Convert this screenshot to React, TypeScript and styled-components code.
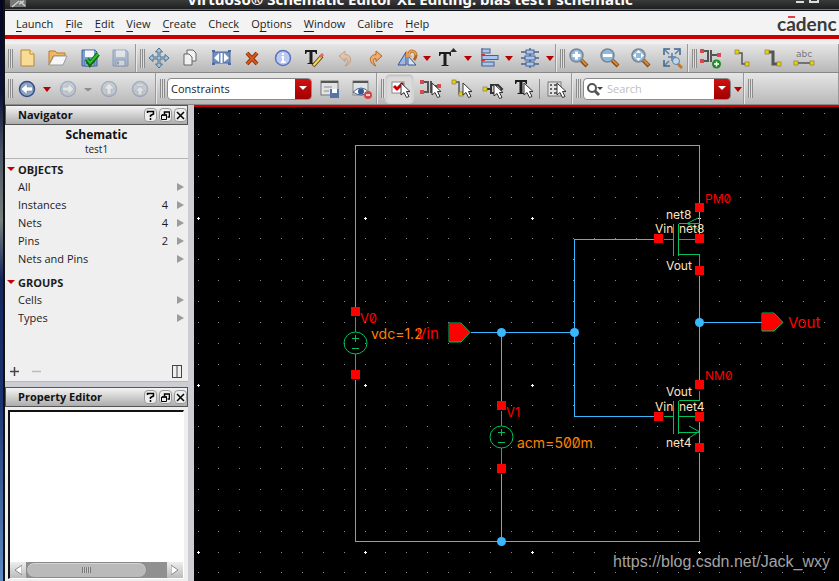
import React from "react";
import styled, { createGlobalStyle } from "styled-components";

const GlobalStyle = createGlobalStyle`
  * { box-sizing: border-box; }
  body { margin: 0; background: #000; overflow: hidden; }
  button, input, select { font: inherit; color: inherit; }
`;

const RED = "#cc0000";

const Desktop = styled.div`
  display: flex;
  min-height: 100vh;
  padding-left: 3px;
  background: linear-gradient(#04061f 0%, #0a1238 16%, #4a5566 26%, #74807c 38%, #16265c 48%, #1c3474 70%, #5a8cc4 100%);
  font-family: "Open Sans", "Noto Sans", sans-serif;
  font-size: 11px;
  line-height: 16px;
  color: #1c1c1c;
`;

const Window = styled.div`
  display: flex;
  flex-direction: column;
  flex: 1;
  min-width: 0;
  height: 100vh;
  border-left: 2px solid #111;
  background: #efefef;
`;

const TitleBar = styled.header`
  display: flex;
  align-items: flex-end;
  height: 11px;
  padding: 0 13px 0 5px;
  overflow: hidden;
  background: linear-gradient(#3a3a3a, #1c1c1c);
  border-bottom: 1px solid #0a0e18;
  box-shadow: inset 0 -1px #66788f;
`;

const TitleText = styled.h1`
  flex: 1;
  margin: 0;
  font: bold 15px/22px "Noto Sans", sans-serif;
  text-align: center;
  color: #fff;
  white-space: nowrap;
`;

const MenuBar = styled.nav`
  display: flex;
  align-items: center;
  height: 28px;
  padding: 2px 0 0 11px;
  gap: 12px;
  background: #f3f3f3;
  border-bottom: 4px solid ${RED};
`;

const MenuItem = styled.button`
  padding: 0;
  border: 0;
  background: none;
  font-size: 11px;
  line-height: 16px;
  u { text-underline-offset: 3px; }
`;

const Logo = styled.div`
  display: flex;
  width: 62px;
  margin-left: auto;
  overflow: hidden;
  font: bold 19px/22px Lato, sans-serif;
  color: #3a3a3a;
`;

const Barred = styled.span`
  position: relative;
  &::before {
    content: "";
    position: absolute;
    top: 3px;
    left: 2px;
    right: 1px;
    height: 2px;
    background: #e04048;
  }
`;

const Toolbars = styled.div`
  padding-top: 5px;
`;

const ToolRow = styled.div<{ $h: number }>`
  display: flex;
  height: ${(p) => p.$h}px;
  gap: 1px;
  background: #e8e8e8;
  border-bottom: 1px solid #888;
`;

const ToolGroup = styled.div<{ $fill?: boolean }>`
  display: flex;
  align-items: center;
  flex: ${(p) => (p.$fill ? "1 1 0" : "0 0 auto")};
  min-width: 0;
  padding: 0 2px 0 3px;
  gap: 4px;
  background: linear-gradient(#e6e6e6, #b8b8b8);
  border-right: 1px solid #999;
`;

const Grip = styled.span`
  width: 5px;
  height: 19px;
  margin-right: -4px;
  background: repeating-linear-gradient(90deg, #8c8c8c 0 1px, #dedede 1px 2px);
`;

const ToolButton = styled.button<{ $on?: boolean }>`
  display: grid;
  place-items: center;
  flex: none;
  width: 27px;
  height: 28px;
  padding: 0;
  border: 0;
  border-radius: 4px;
  background: ${(p) => (p.$on ? "#dadada" : "none")};
  box-shadow: ${(p) => (p.$on ? "inset 0 1px 2px #bbb, 0 0 0 1px #d4d4d4" : "none")};
  &:disabled { opacity: 0.45; }
  svg { display: block; overflow: visible; }
`;

const DropButton = styled.button`
  width: 8px;
  height: 20px;
  margin: 0 -1px;
  padding: 0;
  border: 0;
  background: none;
  flex: none;
  svg { display: block; }
`;

const Divider = styled.span`
  width: 1px;
  height: 20px;
  margin: 0 -2px;
  background: #888;
`;

const Field = styled.div<{ $w: number }>`
  display: flex;
  align-items: center;
  width: ${(p) => p.$w}px;
  height: 22px;
  margin-left: 2px;
  border: 1px solid #8a8a8a;
  border-radius: 4px;
  background: #fff;
  overflow: hidden;
`;

const FieldSelect = styled.select`
  appearance: none;
  width: 100%;
  height: 20px;
  padding: 0 18px 0 3px;
  border: 0;
  background: transparent;
  outline: none;
`;

const FieldInput = styled.input`
  flex: 1;
  min-width: 0;
  height: 20px;
  padding: 0 4px;
  border: 0;
  outline: none;
  font-size: 11px;
  &::placeholder { color: #c0c0c0; opacity: 1; }
`;

const RedCap = styled.span`
  display: grid;
  place-items: center;
  flex: none;
  width: 16px;
  height: 20px;
  margin-left: -16px;
  background: linear-gradient(#d01010, #a00000);
  pointer-events: none;
`;

const SearchCap = styled(RedCap)`
  margin-left: 0;
`;

const Main = styled.main`
  display: flex;
  flex: 1;
  min-height: 0;
`;

const Side = styled.aside`
  display: flex;
  flex-direction: column;
  flex: none;
  width: 189px;
  border-right: 6px solid #cdced4;
`;

const PanelTitle = styled.div`
  display: flex;
  align-items: center;
  height: 20px;
  padding-left: 12px;
  gap: 2px;
  flex: none;
  border: 1px solid #555;
  background: linear-gradient(#f4f4f4, #acacac);
  h2 {
    flex: 1;
    margin: 0;
    font-size: 11px;
    line-height: 16px;
    color: #111;
  }
`;

const PanelButton = styled.button`
  display: grid;
  place-items: center;
  width: 13px;
  height: 14px;
  padding: 0;
  border: 1px solid #999;
  border-radius: 4px;
  background: #eee;
`;

const Heading = styled.div`
  padding: 2px 0 3px;
  text-align: center;
  color: #222;
  border-bottom: 1px solid #b4b4b4;
  strong {
    display: block;
    font-size: 12px;
    color: #111;
  }
  span {
    display: block;
    font-size: 10px;
    line-height: 12px;
  }
`;

const NavBody = styled.div`
  flex: none;
  padding-top: 2px;
`;

const Section = styled.h3`
  display: flex;
  align-items: center;
  gap: 3px;
  height: 17px;
  margin: 0;
  padding-left: 2px;
  font-size: 11px;
`;

const List = styled.ul`
  margin: 0 0 6px;
  padding: 0;
  list-style: none;
`;

const NavRow = styled.button`
  display: flex;
  align-items: center;
  width: 100%;
  height: 18px;
  padding: 0 4px 0 13px;
  border: 0;
  background: none;
  text-align: left;
  span { flex: 1; }
  svg { margin-left: 9px; }
`;

const NavFoot = styled.div`
  display: flex;
  align-items: center;
  gap: 13px;
  height: 20px;
  margin-top: 28px;
  padding: 0 6px 0 5px;
`;

const FootButton = styled.button<{ $end?: boolean }>`
  display: grid;
  padding: 0;
  border: 0;
  background: none;
  margin-left: ${(p) => (p.$end ? "auto" : "0")};
`;

const Splitter = styled.div`
  height: 6px;
  flex: none;
  background: #cdced4;
  border-top: 1px solid #b8b8bc;
`;

const Editor = styled.div`
  display: flex;
  flex-direction: column;
  justify-content: flex-end;
  flex: 1;
  min-height: 0;
  margin: 3px 4px 2px 3px;
  border: 1px solid #fff;
  border-top: 2px solid #111;
  border-left: 2px solid #111;
  background: #fff;
`;

const Scroll = styled.div`
  display: flex;
  height: 16px;
  background: #909090;
`;

const ScrollButton = styled.button`
  display: grid;
  place-items: center;
  width: 16px;
  padding: 0;
  border: 0;
  background: linear-gradient(#eee, #bbb);
`;

const Track = styled.div`
  flex: 1;
  display: flex;
`;

const Thumb = styled.div`
  display: grid;
  place-items: center;
  width: 86%;
  border: 1px solid #8a8a8a;
  border-radius: 8px;
  background: #bababa;
  box-shadow: inset 0 1px #d4d4d4;
`;

const ThumbGrip = styled.span`
  width: 9px;
  height: 6px;
  background: repeating-linear-gradient(90deg, #777 0 1px, #ccc 1px 2px);
`;

const Canvas = styled.section`
  position: relative;
  flex: 1;
  min-width: 0;
  border-top: 2px solid ${RED};
  background: #000;
  overflow: hidden;
  > svg { display: block; width: 100%; height: 100%; }
`;

const Watermark = styled.span`
  position: absolute;
  right: 9px;
  bottom: 8px;
  font: 16px/22px "Liberation Sans", Arial, sans-serif;
  color: #a4a4a4;
`;

const Label = styled.text<{ $c: string; $s: number }>`
  font-family: Inter, sans-serif;
  font-size: ${(p) => p.$s}px;
  font-weight: 400;
  font-feature-settings: "zero" 1;
  fill: ${(p) => p.$c};
`;

/* ---------- icons ---------- */

const Icon = ({ children }: { children: React.ReactNode }) => (
  <svg width="24" height="24" viewBox="0 0 24 24" fill="none" aria-hidden="true">{children}</svg>
);

const Cursor = ({ x = 12, y = 6 }: { x?: number; y?: number }) => (
  <path d="M0 0V12L3 9.500L5.500 14.500L8 13.500L5.500 8.500H9Z" transform={`translate(${x} ${y})`} fill="#fff" stroke="#333" />
);

const Floppy = () => (
  <>
    <path d="M5 4H18L20 6V20H5Z" fill="#7d9fd2" stroke="#42639c" />
    <path d="M8 4.500H17V11H8Z" fill="#f3f6fb" />
    <path d="M8 14H17V20H8Z" fill="#dde4f0" stroke="#42639c" />
    <path d="M10 15.500V18.500" stroke="#42639c" strokeWidth="2" />
  </>
);

const Ball = ({ dir }: { dir: "left" | "right" | "up" | "top" }) => (
  <>
    <circle cx="12" cy="12" r="7.500" fill={dir === "left" ? "#8ea6c4" : "#b8c6d8"} stroke={dir === "left" ? "#304f88" : "#6b83a8"} strokeWidth="1.500" />
    <path
      d={dir === "top" ? "M8 7H16V9H8ZM12 9.500L17 14H14V18H10V14H7Z" : "M6 12L12 6.500V10H17.500V14H12V17.500Z"}
      transform={dir === "right" ? "rotate(180 12 12)" : dir === "up" ? "rotate(90 12 12)" : undefined}
      fill="#fff"
      stroke="#71839c"
      strokeWidth=".6"
    />
  </>
);

const Lens = ({ children }: { children: React.ReactNode }) => (
  <>
    <path d="M14 14L20 20" stroke="#8a4a12" strokeWidth="4" />
    <path d="M14.500 14L19.500 19" stroke="#d88a3c" strokeWidth="2" />
    <circle cx="9.500" cy="9.500" r="6.500" fill="#93b9da" stroke="#7a8794" strokeWidth="1.500" />
    {children}
  </>
);

const Pad = ({ x, y, c = "#e8d400" }: { x: number; y: number; c?: string }) => (
  <rect x={x} y={y} width="4" height="4" fill={c} stroke="#8b7d40" strokeWidth=".7" />
);

const Gate = () => (
  <>
    <path d="M3 5H9V15H3M12 4V16M12 9H20" stroke="#555" strokeWidth="2" />
    <rect x="1" y="3" width="4" height="4" fill="#d8474b" />
    <rect x="1" y="13" width="4" height="4" fill="#d8474b" />
    <rect x="18" y="7" width="4" height="4" fill="#d8474b" />
  </>
);

const LetterT = () => <path d="M3 4H15V8H14L13 6H10.500V17H12.500V18H5.500V17H7.500V6H5L4 8H3Z" fill="#1c1c1c" />;

const Hook = ({ flip }: { flip?: boolean }) => (
  <g transform={flip ? "translate(24 0) scale(-1 1)" : undefined}>
    <path d="M6 10L12 5V8.500C20 9 19 18 12 20C16 15.500 15 12.500 12 12.500V15.500Z" fill={flip ? "#f0ac6c" : "#f2b384"} stroke="#b8651c" strokeLinejoin="round" />
  </g>
);

const icons = {
  create: <><path d="M6 4H15L19 8V20H6Z" fill="#f8dc94" stroke="#b88432" /><path d="M15 4V8H19" fill="#fff0c4" stroke="#b88432" /></>,
  open: <><path d="M3 19V5H9L11 7H19V10H7Z" fill="#f0b860" stroke="#b87a30" /><path d="M3 19L8 10H21L17 19Z" fill="#f7f7f7" stroke="#999" /></>,
  check: <><Floppy /><path d="M10 13L13 18L21 8" stroke="#0b6d0b" strokeWidth="4.500" /><path d="M10 13L13 17L21 8" stroke="#30c030" strokeWidth="2" /></>,
  save: <Floppy />,
  move: <path d="M12 2L15.500 6H13V11H18V8.500L22 12L18 15.500V13H13V18H15.500L12 22L8.500 18H11V13H6V15.500L2 12L6 8.500V11H11V6H8.500Z" fill="#a8c4d8" stroke="#48708e" />,
  copy: <><path d="M9 4H15L18 7V15H9Z" fill="#f1f1f1" stroke="#666" /><path d="M6 8H11L14 11V19H6Z" fill="#f1f1f1" stroke="#666" /></>,
  stretch: <><rect x="4" y="6" width="17" height="11" fill="#6c8fc6" stroke="#4c6a9e" /><path d="M5 12L10 7V16ZM20 12L15 7V16Z" fill="#fff" /><path d="M12.500 7V17" stroke="#fff" strokeWidth="2" /><path d="M3 5H6M3 18H6M19 5H22M19 18H22" stroke="#4c6a9e" strokeWidth="2" /></>,
  del: <><path d="M7 7L17 18M17 7L7 18" stroke="#8c2c04" strokeWidth="4" /><path d="M7 7L17 18M17 7L7 18" stroke="#d85a1c" strokeWidth="2" /></>,
  info: <><circle cx="12" cy="12" r="7.500" fill="#bcc9f0" stroke="#5b73bd" strokeWidth="1.500" /><path d="M12 7V9M10.500 11H12V16M10 16H14.500" stroke="#fff" strokeWidth="2" /></>,
  textEdit: <><LetterT /><path d="M11 20L20 10" stroke="#62441c" strokeWidth="4" /><path d="M11.500 19.500L19.500 10.500" stroke="#f2dc50" strokeWidth="2" /><path d="M18 11L21 8" stroke="#e06a60" strokeWidth="3" /></>,
  undo: <Hook />,
  redo: <Hook flip />,
  rotate: <><path d="M3 19L11 6V19Z" fill="#9db8e8" stroke="#35558e" /><path d="M13 19V10L21 19Z" fill="#dde6f6" stroke="#35558e" /><path d="M14 8C15 4 20 4 21 9C21 12 20 13 19 14" stroke="#b4651c" strokeWidth="3" /><path d="M14 8C15 4 20 4 21 9" stroke="#f0a860" strokeWidth="1.500" /><path d="M11 4V11H17Z" fill="#e49a54" /></>,
  textUp: <><g transform="translate(0 2)"><LetterT /></g><path d="M14 6L17.500 2L21 6Z" fill="#2a2a2a" /></>,
  align: <><path d="M5 2V20" stroke="#456292" /><path d="M4 8.500H8M4 14.500H8" stroke="#d33" /><rect x="5" y="3" width="8" height="4" fill="#a9c4ee" stroke="#456292" /><rect x="5" y="9.500" width="16" height="4" fill="#a9c4ee" stroke="#456292" /><rect x="5" y="16" width="12" height="4" fill="#a9c4ee" stroke="#456292" /></>,
  spread: <><path d="M3 6H21M3 12H21M3 18H21M12 2V22" stroke="#456292" strokeWidth="1.500" /><rect x="8" y="4" width="8" height="4" fill="#a9c4ee" stroke="#456292" /><rect x="7" y="10" width="10" height="4" fill="#a9c4ee" stroke="#456292" /><rect x="8" y="16" width="8" height="4" fill="#a9c4ee" stroke="#456292" /></>,
  zoomIn: <Lens><path d="M9.500 5.500V13.500M5.500 9.500H13.500" stroke="#fff" strokeWidth="3" /></Lens>,
  zoomOut: <Lens><path d="M5 9.500H14" stroke="#fff" strokeWidth="3" /></Lens>,
  zoomFit: <Lens><path d="M9.500 4L12 7H7ZM9.500 15L12 12H7ZM4 9.500L7 7V12ZM15 9.500L12 7V12Z" fill="#fff" /></Lens>,
  zoomBox: <><path d="M4 9V3H10M14 3H20V9M4 14V20H10" stroke="#39648c" strokeWidth="1.500" /><path d="M5 4L9 8M19 4L15 8M5 19L9 15M12 7V15M8 11H16" stroke="#5580a8" strokeWidth="1.500" /><path d="M17 17L22 22" stroke="#c57830" strokeWidth="3" /><circle cx="16" cy="15" r="3.500" fill="#bcd8ec" stroke="#6282a0" /></>,
  instance: <><Gate /><circle cx="17.500" cy="18" r="4.500" fill="#1c8c24" /><path d="M17.500 15.500V20.500M15 18H20" stroke="#fff" strokeWidth="1.500" /></>,
  wire: <><path d="M7 7H12V18H18" stroke="#555" strokeWidth="1.500" /><Pad x={5} y={4} /><Pad x={15} y={16} /></>,
  wideWire: <><path d="M7 6H12V18H18" stroke="#555" strokeWidth="3" /><Pad x={4} y={4} /><Pad x={16} y={16} /></>,
  back: <Ball dir="left" />,
  forward: <Ball dir="right" />,
  up: <Ball dir="up" />,
  top: <Ball dir="top" />,
  form: <><rect x="3" y="4" width="17" height="14" fill="#dfe3e6" stroke="#777" /><path d="M3 5H20" stroke="#555" strokeWidth="2" /><path d="M6 10H14M6 14H11" stroke="#888" /><rect x="12" y="12" width="9" height="9" fill="#5474aa" /><rect x="14" y="12" width="5" height="4" fill="#fff" /></>,
  eye: <><rect x="4" y="4" width="15" height="14" fill="#dfe3e6" stroke="#888" /><path d="M4 5H19" stroke="#555" strokeWidth="2" /><path d="M4 15Q12 7 20 15Q12 21 4 15Z" fill="#fff" stroke="#4a5f80" /><circle cx="12" cy="14.500" r="3" fill="#2c5c9c" /><circle cx="19" cy="18" r="4" fill="#d64444" /><path d="M17 18H21" stroke="#fff" strokeWidth="1.500" /></>,
  selAll: <><rect x="4" y="5" width="12" height="11" fill="#fff" stroke="#888" /><path d="M6 9L9 12L15 6" stroke="#d00000" strokeWidth="3" /><Cursor x={13} /></>,
  selInst: <><Gate /><Cursor x={13} /></>,
  selWire: <><path d="M4 5H9V17H13" stroke="#555" strokeWidth="1.500" /><Pad x={2} y={3} /><Pad x={9} y={15} /><Cursor x={13} /></>,
  selPin: <><path d="M3 12H10M10 8H17L21 12L17 16H10Z" stroke="#333" strokeWidth="2" /><Pad x={2} y={10} /><Cursor x={13} y={7} /></>,
  selText: <><g transform="translate(0 -1)"><LetterT /></g><Cursor x={12} /></>,
  selList: <><rect x="4" y="5" width="13" height="14" fill="#e4e4e4" stroke="#777" /><path d="M6 8H8M10 8H15M6 12H8M10 12H15M6 16H8M10 16H13" stroke="#666" strokeWidth="2" /><Cursor x={13} /></>,
};

type IconName = keyof typeof icons;

const Tool = ({ name, label, off, on }: { name: IconName; label: string; off?: boolean; on?: boolean }) => (
  <ToolButton type="button" aria-label={label} disabled={off} $on={on}>
    <Icon>{icons[name]}</Icon>
  </ToolButton>
);

const Drop = ({ label, off }: { label: string; off?: boolean }) => (
  <DropButton type="button" aria-label={label} disabled={off}>
    <svg width="8" height="20"><path d={off ? "M0 9H8L5 12H3Z" : "M0 8H8L4 13Z"} fill={off ? "#8e8e8e" : "#b80000"} /></svg>
  </DropButton>
);

const WhiteArrow = () => <svg width="8" height="5"><path d="M0 0H8L4 4Z" fill="#fff" /></svg>;

/* ---------- panels ---------- */

const PanelHead = ({ title }: { title: string }) => (
  <PanelTitle>
    <h2>{title}</h2>
    <PanelButton type="button" aria-label="Help">
      <svg width="9" height="10" fill="none" stroke="#000" strokeWidth="1.500"><path d="M1.500 3V1.500H7.500V4L4.500 5.500V7M4.500 8V10" /></svg>
    </PanelButton>
    <PanelButton type="button" aria-label="Float">
      <svg width="9" height="9" fill="none" stroke="#000"><path d="M3.500 3V1H8.500V6H6.500M3 1H9M1 4H6" strokeWidth="1.500" /><path d="M.5 4H5.500V8.500H.5Z" /></svg>
    </PanelButton>
    <PanelButton type="button" aria-label="Close">
      <svg width="9" height="9" stroke="#000" strokeWidth="1.500"><path d="M1 1L8 8M8 1L1 8" /></svg>
    </PanelButton>
  </PanelTitle>
);

const NavSection = ({ title, rows }: { title: string; rows: [string, number?][] }) => (
  <>
    <Section><svg width="8" height="5"><path d="M0 0H8L4 4Z" fill="#c40000" /></svg>{title}</Section>
    <List>
      {rows.map(([name, count]) => (
        <li key={name}>
          <NavRow type="button">
            <span>{name}</span>{count}
            <svg width="7" height="8"><path d="M0 0L7 4L0 8Z" fill="#9c9c9c" /></svg>
          </NavRow>
        </li>
      ))}
    </List>
  </>
);

/* ---------- schematic ---------- */

const PITCH = 167 / 8;
const CYAN = "#38b8ff";
const GREEN = "#00c060";
const CREAM = "#ffe4c0";

const GridDots = () => {
  const minor: string[] = [];
  const major: string[] = [];
  for (let i = 0; i < 96; i++) {
    for (let j = -5; j < 60; j++) {
      const x = Math.floor(4 + i * PITCH);
      const y = Math.floor(111 + j * PITCH);
      if (i % 8 === 0 && j % 8 === 0) major.push(`M${x - 1} ${y}h3v1h-3zM${x} ${y - 1}h1v3h-1z`);
      else minor.push(`M${x} ${y}h1v1h-1z`);
    }
  }
  return (
    <>
      <path d={minor.join("")} fill="#8888a0" />
      <path d={major.join("")} fill="#fff" />
    </>
  );
};

const Source = ({ x, y }: { x: number; y: number }) => (
  <g transform={`translate(${x} ${y})`} stroke={GREEN} fill="none">
    <path d="M.5-26V-11M.5 11V28M-3 -4.500H4M.5 -8V-1M-3 5.500H4" shapeRendering="crispEdges" />
    <ellipse cx=".5" cy="0" rx="11.500" ry="11" />
  </g>
);

const terminals = [
  [161, 205], [161, 268], [307, 299], [307, 362], [505, 101], [505, 132], [505, 164],
  [464, 132], [505, 278], [505, 310], [464, 310], [505, 341],
];
const junctions = [[307, 225], [380, 225], [505, 215], [307, 434]];
const labels: [string, number, number, string, number][] = [
  ["V0", 166, 216, "#f00", 13], ["vdc=1.2", 177, 232, "#ff8000", 14], ["Vin", 222, 232, "#f00", 15],
  ["V1", 312, 310, "#f00", 13], ["acm=500m", 323, 341, "#ff8000", 14],
  ["PM0", 511, 96, "#f00", 12], ["net8", 472, 112, CREAM, 12], ["Vin", 461, 126, CREAM, 12],
  ["net8", 485, 126, CREAM, 12], ["Vout", 472, 163, CREAM, 12], ["Vout", 594, 221, "#f00", 15],
  ["NM0", 511, 273, "#f00", 12], ["Vout", 472, 289, CREAM, 12], ["Vin", 461, 304, CREAM, 12],
  ["net4", 485, 304, CREAM, 12], ["net4", 472, 340, CREAM, 12],
];

const Schematic = () => (
  <svg role="img" aria-label="Schematic test1">
    <g shapeRendering="crispEdges">
      <GridDots />
    </g>
    <g transform="translate(.5 .5)" fill="none" shapeRendering="crispEdges">
      <path
        stroke={CYAN}
        d="M161 200V38H505V127M161 272V434H505V345M505 168V273M505 314V338M276 225H380M307 225V294M307 366V434M459 132H380V309H459M505 215H568"
      />
      <path
        stroke={GREEN}
        d="M469 132H479M479 116V148M484 116V148M484 116H505M484 132H501M484 147H505V160M469 309H479M479 293V326M484 293V326M484 293H505V283M484 309H501M484 325H505"
      />
    </g>
    <path stroke={GREEN} fill="none" d="M504 111L493 116.500L504 122M495 319L505 324.500L495 331" />
    <Source x={161} y={236} />
    <Source x={307} y={330} />
    <path d="M255 216H267L276 225.500L267 235H255ZM568 206H580L589 215.500L580 224H568Z" fill="#f00" stroke={GREEN} />
    <path d="M255 216H267L275 225.500L267 234H255ZM568 206H580L588 215.500L580 223H568Z" fill="#f00" />
    {terminals.map(([x, y]) => <rect key={`${x}-${y}`} x={x - 4} y={y - 5} width="9" height="9" fill="#f00" />)}
    {junctions.map(([x, y]) => <circle key={`${x}-${y}`} cx={x + 0.5} cy={y + 0.5} r="4.500" fill={CYAN} />)}
    {labels.map(([t, x, y, c, s]) => <Label key={`${x}-${y}`} x={x} y={y} $c={c} $s={s}>{t}</Label>)}
  </svg>
);

export default function App() {
  return (
    <>
      <GlobalStyle />
      <Desktop>
        <Window>
          <TitleBar>
            <svg width="16" height="10"><path d="M0 0H16V7H0Z" fill="#777" /><path d="M2 7L9 1M9 4L14 1M10 1L15 6" stroke="#ccc" strokeWidth="1.500" /></svg>
            <TitleText>Virtuoso® Schematic Editor XL Editing: bias test1 schematic</TitleText>
            <svg width="32" height="10" fill="none" stroke="#ddd" strokeWidth="2"><path d="M2 3H10M16 0V3H24V0" transform="translate(0 -1)" /></svg>
          </TitleBar>
          <MenuBar>
            <MenuItem><u>L</u>aunch</MenuItem>
            <MenuItem><u>F</u>ile</MenuItem>
            <MenuItem><u>E</u>dit</MenuItem>
            <MenuItem><u>V</u>iew</MenuItem>
            <MenuItem><u>C</u>reate</MenuItem>
            <MenuItem>Chec<u>k</u></MenuItem>
            <MenuItem>O<u>p</u>tions</MenuItem>
            <MenuItem><u>W</u>indow</MenuItem>
            <MenuItem>Cali<u>b</u>re</MenuItem>
            <MenuItem><u>H</u>elp</MenuItem>
            <Logo>c<Barred>a</Barred>denc</Logo>
          </MenuBar>
          <Toolbars>
            <ToolRow $h={29}>
              <ToolGroup>
                <Grip />
                <Tool name="create" label="New" />
                <Tool name="open" label="Open" />
                <Tool name="check" label="Check and save" />
                <Tool name="save" label="Save" off />
              </ToolGroup>
              <ToolGroup>
                <Grip />
                <Tool name="move" label="Move" />
                <Tool name="copy" label="Copy" />
                <Tool name="stretch" label="Stretch" />
                <Tool name="del" label="Delete" />
                <Tool name="info" label="Properties" />
                <Tool name="textEdit" label="Edit text" />
                <Tool name="undo" label="Undo" off />
                <Tool name="redo" label="Redo" />
                <Tool name="rotate" label="Rotate" />
                <Drop label="Rotate options" />
                <Tool name="textUp" label="Text direction" />
                <Drop label="Text options" />
                <Tool name="align" label="Align" />
                <Drop label="Align options" />
                <Tool name="spread" label="Distribute" />
                <Drop label="Distribute options" />
              </ToolGroup>
              <ToolGroup>
                <Grip />
                <Tool name="zoomIn" label="Zoom in" />
                <Tool name="zoomOut" label="Zoom out" />
                <Tool name="zoomFit" label="Zoom to fit" />
                <Tool name="zoomBox" label="Zoom to selection" />
              </ToolGroup>
              <ToolGroup $fill>
                <Grip />
                <Tool name="instance" label="Create instance" />
                <Tool name="wire" label="Create wire" />
                <Tool name="wideWire" label="Create wide wire" />
                <ToolButton type="button" aria-label="Wire name">
                  <Icon>
                    <text x="12" y="11" textAnchor="middle" fontFamily="DejaVu Sans" fontSize="9" fill="#777">abc</text>
                    <path d="M4 17H20" stroke="#555" strokeWidth="1.500" />
                    <Pad x={2} y={15} /><Pad x={18} y={15} />
                  </Icon>
                </ToolButton>
              </ToolGroup>
            </ToolRow>
            <ToolRow $h={32}>
              <ToolGroup>
                <Grip />
                <Tool name="back" label="Back" />
                <Drop label="Back history" />
                <Tool name="forward" label="Forward" off />
                <Drop label="Forward history" off />
                <Tool name="up" label="Up" off />
                <Tool name="top" label="Top" off />
              </ToolGroup>
              <ToolGroup>
                <Grip />
                <Field $w={145}>
                  <FieldSelect aria-label="Workspace" defaultValue="Constraints"><option>Constraints</option></FieldSelect>
                  <RedCap><WhiteArrow /></RedCap>
                </Field>
                <Tool name="form" label="Save workspace" />
                <Tool name="eye" label="Hide assistants" />
              </ToolGroup>
              <ToolGroup>
                <Grip />
                <Tool name="selAll" label="Select all" on />
                <Tool name="selInst" label="Select instances" />
                <Tool name="selWire" label="Select wires" />
                <Tool name="selPin" label="Select pins" />
                <Tool name="selText" label="Select text" />
                <Divider />
                <Tool name="selList" label="Selection filter" />
              </ToolGroup>
              <ToolGroup>
                <Grip />
                <Field $w={148}>
                  <svg width="19" height="16" fill="none"><circle cx="8" cy="7" r="4" stroke="#555" strokeWidth="2" /><path d="M11 10L15 14" stroke="#555" strokeWidth="3" /><path d="M13 6H19L16 9Z" fill="#444" /></svg>
                  <FieldInput aria-label="Search" placeholder="Search" />
                  <SearchCap><WhiteArrow /></SearchCap>
                </Field>
                <Drop label="Search options" />
              </ToolGroup>
              <ToolGroup $fill><Grip /></ToolGroup>
            </ToolRow>
          </Toolbars>
          <Main>
            <Side>
              <PanelHead title="Navigator" />
              <Heading><strong>Schematic</strong><span>test1</span></Heading>
              <NavBody>
                <NavSection title="OBJECTS" rows={[["All"], ["Instances", 4], ["Nets", 4], ["Pins", 2], ["Nets and Pins"]]} />
                <NavSection title="GROUPS" rows={[["Cells"], ["Types"]]} />
              </NavBody>
              <NavFoot>
                <FootButton type="button" aria-label="Add"><svg width="9" height="9" stroke="#444" strokeWidth="1.500"><path d="M4.500 0V9M0 4.500H9" /></svg></FootButton>
                <FootButton type="button" aria-label="Remove" disabled><svg width="9" height="9" stroke="#bbb" strokeWidth="1.500"><path d="M0 4.500H9" /></svg></FootButton>
                <FootButton type="button" aria-label="Columns" $end><svg width="10" height="13" fill="none" stroke="#444"><rect x=".5" y=".5" width="9" height="12" /><path d="M5 1V12" /></svg></FootButton>
              </NavFoot>
              <Splitter />
              <PanelHead title="Property Editor" />
              <Editor>
                <Scroll>
                  <ScrollButton type="button" aria-label="Scroll left"><svg width="8" height="10"><path d="M8 0V10L1 5Z" fill="#fff" stroke="#888" /></svg></ScrollButton>
                  <Track><Thumb><ThumbGrip /></Thumb></Track>
                  <ScrollButton type="button" aria-label="Scroll right"><svg width="8" height="10"><path d="M0 0V10L7 5Z" fill="#fff" stroke="#888" /></svg></ScrollButton>
                </Scroll>
              </Editor>
            </Side>
            <Canvas>
              <Schematic />
              <Watermark>https://blog.csdn.net/Jack_wxy</Watermark>
            </Canvas>
          </Main>
        </Window>
      </Desktop>
    </>
  );
}
